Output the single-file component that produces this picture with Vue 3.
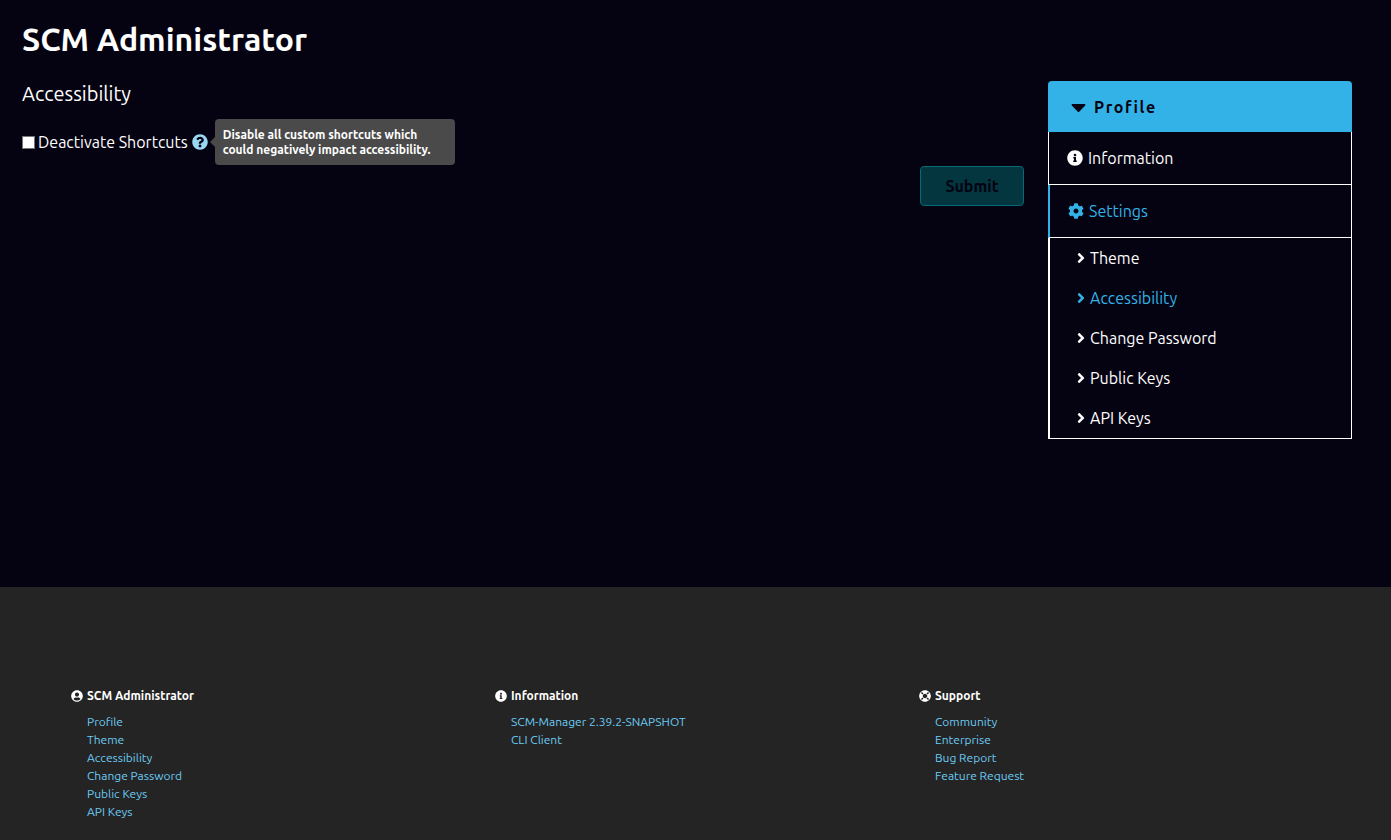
<script setup>
import { ref } from 'vue'

const icons = {
  info: { box: '0 0 512 512', d: 'M256 8C119.043 8 8 119.083 8 256c0 136.997 111.043 248 248 248s248-111.003 248-248C504 119.083 392.957 8 256 8zm0 110c23.196 0 42 18.804 42 42s-18.804 42-42 42-42-18.804-42-42 18.804-42 42-42zm56 254c0 6.627-5.373 12-12 12h-88c-6.627 0-12-5.373-12-12v-24c0-6.627 5.373-12 12-12h12v-64h-12c-6.627 0-12-5.373-12-12v-24c0-6.627 5.373-12 12-12h64c6.627 0 12 5.373 12 12v100h12c6.627 0 12 5.373 12 12v24z' },
  question: { box: '0 0 512 512', d: 'M504 256c0 136.997-111.043 248-248 248S8 392.997 8 256C8 119.083 119.043 8 256 8s248 111.083 248 248zM262.655 90c-54.497 0-89.255 22.957-116.549 63.758-3.536 5.286-2.353 12.415 2.715 16.258l34.699 26.31c5.205 3.947 12.621 3.008 16.665-2.122 17.864-22.658 30.113-35.797 57.303-35.797 20.429 0 45.698 13.148 45.698 32.958 0 14.976-12.363 22.667-32.534 33.976C247.128 238.528 216 254.941 216 296v4c0 6.627 5.373 12 12 12h56c6.627 0 12-5.373 12-12v-1.333c0-28.462 83.186-29.647 83.186-106.667 0-58.002-60.165-102-116.531-102zM256 338c-25.365 0-46 20.635-46 46 0 25.364 20.635 46 46 46s46-20.636 46-46c0-25.365-20.635-46-46-46z' },
  cog: { box: '0 0 512 512', d: 'M487.4 315.7l-42.6-24.6c4.3-23.2 4.3-47 0-70.2l42.6-24.6c4.9-2.8 7.1-8.6 5.5-14-11.1-35.6-30-67.8-54.7-94.6-3.8-4.1-10-5.1-14.8-2.3L380.8 110c-17.9-15.4-38.5-27.3-60.8-35.1V25.8c0-5.6-3.9-10.5-9.4-11.7-36.7-8.2-74.3-7.8-109.2 0-5.5 1.2-9.4 6.1-9.4 11.7V75c-22.2 7.9-42.8 19.8-60.8 35.1L88.7 85.5c-4.9-2.8-11-1.9-14.8 2.3-24.7 26.7-43.6 58.9-54.7 94.6-1.7 5.4.6 11.2 5.5 14L67.3 221c-4.3 23.2-4.3 47 0 70.2l-42.6 24.6c-4.9 2.8-7.1 8.6-5.5 14 11.1 35.6 30 67.8 54.7 94.6 3.8 4.1 10 5.1 14.8 2.3l42.6-24.6c17.9 15.4 38.5 27.3 60.8 35.1v49.2c0 5.6 3.9 10.5 9.4 11.7 36.7 8.2 74.3 7.8 109.2 0 5.5-1.2 9.4-6.1 9.4-11.7v-49.2c22.2-7.9 42.8-19.8 60.8-35.1l42.6 24.6c4.9 2.8 11 1.9 14.8-2.3 24.7-26.7 43.6-58.9 54.7-94.6 1.5-5.5-.7-11.3-5.6-14.1zM256 336c-44.1 0-80-35.9-80-80s35.9-80 80-80 80 35.9 80 80-35.9 80-80 80z' },
  user: { box: '0 0 496 512', d: 'M248 8C111 8 0 119 0 256s111 248 248 248 248-111 248-248S385 8 248 8zm0 96c48.6 0 88 39.4 88 88s-39.4 88-88 88-88-39.4-88-88 39.4-88 88-88zm0 344c-58.7 0-111.3-26.6-146.5-68.2 18.8-35.4 55.6-59.8 98.5-59.8 2.4 0 4.8.4 7.1 1.1 13 4.2 26.6 6.9 40.9 6.9 14.3 0 28-2.7 40.9-6.9 2.3-.7 4.7-1.1 7.1-1.1 42.9 0 79.7 24.4 98.5 59.8C359.3 421.4 306.7 448 248 448z' },
  support: { box: '0 0 512 512', d: 'M256 8C119.033 8 8 119.033 8 256s111.033 248 248 248 248-111.033 248-248S392.967 8 256 8zm173.696 119.559l-63.399 63.399c-10.987-18.559-26.67-34.252-45.255-45.255l63.399-63.399a218.396 218.396 0 0 1 45.255 45.255zM256 352c-53.019 0-96-42.981-96-96s42.981-96 96-96 96 42.981 96 96-42.981 96-96 96zM127.559 82.304l63.399 63.399c-18.559 10.987-34.252 26.67-45.255 45.255l-63.399-63.399a218.372 218.372 0 0 1 45.255-45.255zM82.304 384.441l63.399-63.399c10.987 18.559 26.67 34.252 45.255 45.255l-63.399 63.399a218.396 218.396 0 0 1-45.255-45.255zm302.137 45.255l-63.399-63.399c18.559-10.987 34.252-26.67 45.255-45.255l63.399 63.399a218.403 218.403 0 0 1-45.255 45.255z' }
}

const deactivated = ref(false)
const open = ref(true)
const subItems = ['Theme', 'Accessibility', 'Change Password', 'Public Keys', 'API Keys']
const footer = [
  { icon: 'user', title: 'SCM Administrator', links: ['Profile', ...subItems] },
  { icon: 'info', title: 'Information', links: ['SCM-Manager 2.39.2-SNAPSHOT', 'CLI Client'] },
  { icon: 'support', title: 'Support', links: ['Community', 'Enterprise', 'Bug Report', 'Feature Request'] }
]
</script>

<template>
  <div class="page">
    <main class="main">
      <h1 class="title">SCM Administrator</h1>
      <div class="columns">
        <form class="form" @submit.prevent>
          <h2 class="subtitle">Accessibility</h2>
          <div class="field">
            <label class="check">
              <input v-model="deactivated" class="box" type="checkbox" />
              <span>Deactivate Shortcuts</span>
            </label>
            <span class="help">
              <svg class="icon" :viewBox="icons.question.box" aria-hidden="true"><path :d="icons.question.d" /></svg>
              <span class="tooltip" role="tooltip">Disable all custom shortcuts which could negatively impact accessibility.</span>
            </span>
          </div>
          <div class="actions">
            <button class="submit" type="submit" :disabled="!deactivated">Submit</button>
          </div>
        </form>

        <nav class="menu" aria-label="Profile">
          <button class="menu-head" type="button" :aria-expanded="open" @click="open = !open">
            <svg class="caret" viewBox="0 0 320 512" aria-hidden="true"><path d="M31.3 192h257.3c17.8 0 26.7 21.5 14.1 34.1L174.1 354.8c-7.8 7.8-20.5 7.8-28.3 0L17.2 226.1C4.6 213.5 13.5 192 31.3 192z" /></svg>
            <span>Profile</span>
          </button>
          <div v-show="open" class="menu-body">
            <a class="entry" href="#information">
              <svg class="icon" :viewBox="icons.info.box" aria-hidden="true"><path :d="icons.info.d" /></svg>
              <span>Information</span>
            </a>
            <a class="entry active" href="#settings">
              <svg class="icon" :viewBox="icons.cog.box" aria-hidden="true"><path :d="icons.cog.d" /></svg>
              <span>Settings</span>
            </a>
            <ul class="sub">
              <li v-for="item in subItems" :key="item">
                <a class="sub-link" :class="{ current: item === 'Accessibility' }" href="#settings">
                  <svg class="chevron" viewBox="0 0 256 512" aria-hidden="true"><path d="M224.3 273l-136 136c-9.4 9.4-24.6 9.4-33.9 0l-22.6-22.6c-9.4-9.4-9.4-24.6 0-33.9l96.4-96.4-96.4-96.4c-9.4-9.4-9.4-24.6 0-33.9L54.3 103c9.4-9.4 24.6-9.4 33.9 0l136 136c9.5 9.4 9.5 24.6.1 34z" /></svg>
                  <span>{{ item }}</span>
                </a>
              </li>
            </ul>
          </div>
        </nav>
      </div>
    </main>

    <footer class="footer">
      <section v-for="group in footer" :key="group.title">
        <h3 class="group-title">
          <svg class="small-icon" :viewBox="icons[group.icon].box" aria-hidden="true"><path :d="icons[group.icon].d" /></svg>
          <span>{{ group.title }}</span>
        </h3>
        <ul class="links">
          <li v-for="link in group.links" :key="link"><a class="link" href="#footer">{{ link }}</a></li>
        </ul>
      </section>
    </footer>
  </div>
</template>

<style>
body {
  margin: 0;
  background: #050311;
}
</style>

<style scoped>
.page {
  display: flex;
  flex-direction: column;
  min-height: 100vh;
  background: #050311;
  color: #fff;
  font-family: Ubuntu, "Noto Sans", "Open Sans", sans-serif;
  font-size: 16px;
  line-height: 24px;
}
.page * {
  box-sizing: border-box;
}
svg {
  display: block;
  flex: none;
  fill: currentColor;
}
ul {
  margin: 0;
  padding: 0;
  list-style: none;
}
a {
  text-decoration: none;
}
.main {
  flex: 1;
  padding: 19px 39px 24px 22px;
}
.title {
  margin: 0 0 22px;
  font-size: 32px;
  line-height: 40px;
  font-weight: 700;
}
.columns {
  display: grid;
  grid-template-columns: minmax(0, 1fr) 304px;
  gap: 24px;
  align-items: start;
}
.subtitle {
  margin: 0 0 24px;
  font-size: 20px;
  line-height: 25px;
  font-weight: 400;
}
.field {
  display: flex;
  align-items: center;
  gap: 4px;
}
.check {
  display: flex;
  align-items: center;
  gap: 3px;
}
.box {
  appearance: none;
  width: 13px;
  height: 13px;
  margin: 0;
  border: 1px solid #767676;
  background: #fff;
}
.box:checked {
  border: 3px solid #fff;
  background: #33b2e8;
}
.icon {
  width: 16px;
  height: 16px;
}
.help {
  position: relative;
  color: #99d8f3;
}
.tooltip {
  position: absolute;
  top: 50%;
  left: 100%;
  width: 240px;
  margin-left: 7px;
  padding: 8px;
  border-radius: 4px;
  background: #4a4a4a;
  color: #fff;
  font-size: 12px;
  line-height: 15px;
  font-weight: 700;
  transform: translateY(-50%);
}
.tooltip::before {
  content: "";
  position: absolute;
  top: 50%;
  right: 100%;
  border: 5px solid transparent;
  border-left-width: 0;
  border-right-color: #4a4a4a;
  transform: translateY(-50%);
}
.actions {
  display: flex;
  justify-content: flex-end;
  margin-top: 12px;
}
.submit {
  width: 104px;
  height: 40px;
  padding: 0;
  border: 1px solid #026b75;
  border-radius: 4px;
  background: #03363f;
  color: #050311;
  font: inherit;
  font-weight: 700;
}
.menu-head {
  display: flex;
  align-items: center;
  gap: 8px;
  width: 100%;
  height: 51px;
  padding: 0 23px;
  border: 0;
  border-radius: 4px 4px 0 0;
  background: #33b2e8;
  color: #050311;
  font: inherit;
  font-weight: 700;
  letter-spacing: 0.1em;
}
.caret {
  width: 15px;
  height: 24px;
}
.menu-body {
  border-right: 1px solid #fff;
  border-bottom: 1px solid #fff;
}
.entry {
  display: flex;
  align-items: center;
  gap: 5px;
  height: 53px;
  padding: 0 18px;
  border-left: 1px solid #fff;
  border-bottom: 1px solid #fff;
  color: #fff;
}
.active {
  border-left: 2px solid #33b2e8;
  color: #33b2e8;
}
.sub {
  border-left: 2px solid #fff;
}
.sub-link {
  display: flex;
  align-items: center;
  gap: 5px;
  height: 40px;
  padding: 0 27px;
  color: #fff;
}
.current {
  color: #33b2e8;
}
.chevron {
  width: 8px;
  height: 16px;
}
.footer {
  display: grid;
  grid-template-columns: repeat(3, minmax(0, 1fr));
  gap: 24px;
  padding: 100px 72px 19px 71px;
  background: #242424;
  font-size: 12px;
  line-height: 18px;
}
.group-title {
  display: flex;
  align-items: center;
  gap: 4px;
  margin: 0 0 8px;
  font-size: 12px;
  font-weight: 700;
}
.small-icon {
  width: 12px;
  height: 12px;
}
.links {
  padding-left: 16px;
}
.link {
  color: #6ccbf5;
}
</style>
